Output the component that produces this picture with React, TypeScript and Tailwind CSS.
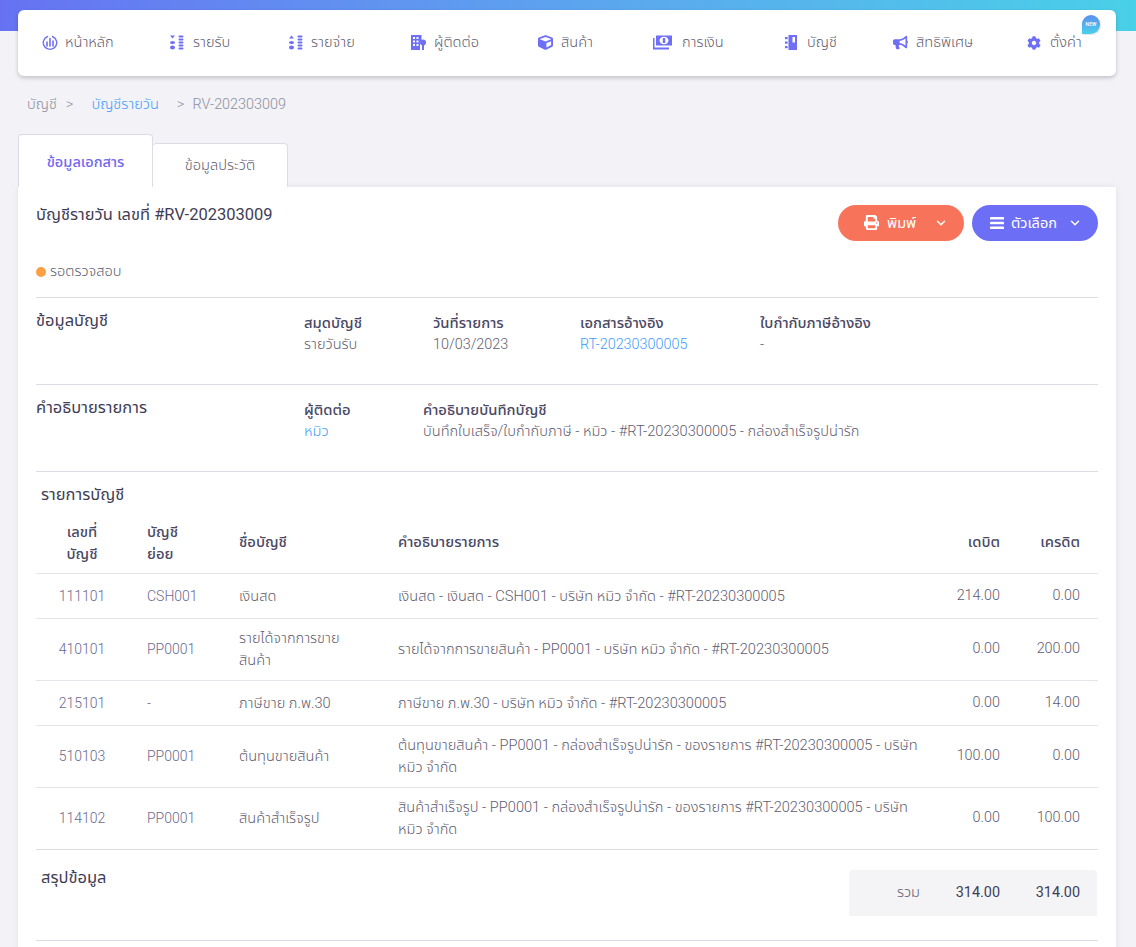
import { FaPrint, FaCog, FaBullhorn, FaCube } from 'react-icons/fa';
import { ChevronDown } from 'lucide-react';

const fontStack = "font-['Roboto','Noto_Sans','Noto_Sans_Thai',sans-serif]";

function Stacks({ up }: { up?: boolean }) {
  return (
    <svg viewBox="0 0 14 15" className="h-[15px] w-[14px]" fill="#6e6ff5">
      <path d={up ? 'M2.5 0.5 L5 3.5 H0 Z' : 'M0 0.5 H5 L2.5 3.5 Z'} />
      <ellipse cx="2.5" cy="7.500" rx="2.500" ry="1.500" />
      <ellipse cx="2.5" cy="12.500" rx="2.500" ry="2" />
      <rect x="8.5" y="0.5" width="5" height="2" rx="1" />
      <rect x="8.5" y="3.5" width="5" height="2" rx="1" />
      <rect x="8.5" y="6.5" width="5" height="2" rx="1" />
      <rect x="8.5" y="9.5" width="5" height="2" rx="1" />
      <rect x="8.5" y="12.5" width="5" height="2" rx="1" />
    </svg>
  );
}

function HomeIcon() {
  return (
    <svg viewBox="0 0 16 16" className="h-[16px] w-[16px]" fill="none" stroke="#6e6ff5">
      <path d="M5.500 1.500 A6.700 6.700 0 1 0 10.500 1.500" strokeWidth="1.400" strokeLinecap="round" />
      <path d="M5 7v4M8 3.500v7.500M11 6v5" strokeWidth="1.600" strokeLinecap="round" />
    </svg>
  );
}

function ContactIcon() {
  return (
    <svg viewBox="0 0 15 15" className="h-[15px] w-[15px]" fill="#6e6ff5">
      <path d="M0 0H10.5V5.500A3 3 0 0 0 9 9V15H0ZM2 2V4H4V2ZM5.5 2V4H7.5V2ZM2 5.5V7.5H4V5.5ZM5.5 5.5V7.5H7.5V5.5ZM2 9V11H4V9ZM5.5 9V11H7.5V9Z" fillRule="evenodd" />
      <circle cx="12" cy="7.500" r="3" />
      <rect x="11" y="9.500" width="2" height="5.500" />
    </svg>
  );
}

function MoneyIcon() {
  return (
    <svg viewBox="0 0 19 15" className="h-[15px] w-[19px]" fill="#6e6ff5">
      <path d="M3 0.500H19V10.500H3ZM11 1.800C8.500 1.800 6.500 3.300 6.500 5.500S8.500 9.200 11 9.200S15.500 7.700 15.500 5.500S13.500 1.800 11 1.800Z" fillRule="evenodd" />
      <rect x="9.800" y="3" width="2.400" height="5" />
      <path d="M0 3H1.500V12.500H16V14.500H0Z" />
    </svg>
  );
}

function BookIcon() {
  return (
    <svg viewBox="0 0 12 15" className="h-[15px] w-[12px]" fill="#6e6ff5">
      <path d="M3.500 0H12V15H3.500ZM7.500 2V7.500H10V2Z" fillRule="evenodd" />
      <rect x="0" y="2" width="2.600" height="2.200" />
      <rect x="0" y="6.500" width="2.600" height="2.200" />
      <rect x="0" y="11" width="2.600" height="2.200" />
    </svg>
  );
}

function BarsIcon() {
  return (
    <svg viewBox="0 0 14 12" className="h-[12px] w-[14px]" fill="currentColor">
      <rect x="0" y="0" width="14" height="2.600" rx="0.600" />
      <rect x="0" y="4.700" width="14" height="2.600" rx="0.600" />
      <rect x="0" y="9.400" width="14" height="2.600" rx="0.600" />
    </svg>
  );
}

const navItems = [
  { icon: <HomeIcon />, label: 'หน้าหลัก', width: 'w-[128px]', gap: 'gap-[7px]' },
  { icon: <Stacks />, label: 'รายรับ', width: 'w-[119px]', gap: 'gap-[9px]' },
  { icon: <Stacks up />, label: 'รายจ่าย', width: 'w-[122px]', gap: 'gap-[8px]' },
  { icon: <ContactIcon />, label: 'ผู้ติดต่อ', width: 'w-[127px]', gap: 'gap-[8px]' },
  { icon: <FaCube className="h-[15px] w-[15px] text-[#6e6ff5]" />, label: 'สินค้า', width: 'w-[115px]', gap: 'gap-[8px]' },
  { icon: <MoneyIcon />, label: 'การเงิน', width: 'w-[132px]', gap: 'gap-[10px]' },
  { icon: <BookIcon />, label: 'บัญชี', width: 'w-[108px]', gap: 'gap-[10px]' },
  { icon: <FaBullhorn className="h-[15px] w-[15px] text-[#6e6ff5]" />, label: 'สิทธิพิเศษ', width: 'w-[134px]', gap: 'gap-[8px]' },
];

const rows = [
  { code: '111101', sub: 'CSH001', name: 'เงินสด', desc: 'เงินสด - เงินสด - CSH001 - บริษัท หมิว จำกัด - #RT-20230300005', dr: '214.00', cr: '0.00' },
  { code: '410101', sub: 'PP0001', name: 'รายได้จากการขายสินค้า', desc: 'รายได้จากการขายสินค้า - PP0001 - บริษัท หมิว จำกัด - #RT-20230300005', dr: '0.00', cr: '200.00' },
  { code: '215101', sub: '-', name: 'ภาษีขาย ภ.พ.30', desc: 'ภาษีขาย ภ.พ.30 - บริษัท หมิว จำกัด - #RT-20230300005', dr: '0.00', cr: '14.00' },
  { code: '510103', sub: 'PP0001', name: 'ต้นทุนขายสินค้า', desc: 'ต้นทุนขายสินค้า - PP0001 - กล่องสำเร็จรูปน่ารัก - ของรายการ #RT-20230300005 - บริษัท หมิว จำกัด', dr: '100.00', cr: '0.00' },
  { code: '114102', sub: 'PP0001', name: 'สินค้าสำเร็จรูป', desc: 'สินค้าสำเร็จรูป - PP0001 - กล่องสำเร็จรูปน่ารัก - ของรายการ #RT-20230300005 - บริษัท หมิว จำกัด', dr: '0.00', cr: '100.00' },
];

export default function App() {
  return (
    <div className={`h-[947px] overflow-hidden bg-[#f2f2f7] text-[14.6px] font-light text-[#5f5c70] ${fontStack}`}>
      <div className="h-[31px] bg-gradient-to-r from-[#6672f2] to-[#48d0e8]" />

      <div className="relative ml-[18px] mr-[20px] -mt-[21px] flex h-[66px] items-center rounded-[6px] bg-white pl-[24px] shadow-[0_2px_4px_rgba(0,0,0,0.2)]">
        {navItems.map((item) => (
          <div key={item.label} className={`flex items-center ${item.gap} ${item.width}`}>
            {item.icon}
            <span>{item.label}</span>
          </div>
        ))}
        <div className="flex items-center gap-[9px]">
          <FaCog className="h-[14px] w-[14px] text-[#6e6ff5]" />
          <span>ตั้งค่า</span>
        </div>
        <div className="absolute right-[16px] top-[5px] flex h-[19px] w-[18px] items-center justify-center rounded-full rounded-bl-[2px] bg-gradient-to-b from-[#5b8df0] to-[#48d0e8] text-[5px] font-medium text-white shadow-[1px_1px_1px_rgba(0,0,0,0.1)]">
          NEW
        </div>
      </div>

      <div className="flex h-[39px] items-center pl-[27px] pt-[19px] text-[#8f8f9c]">
        <span>บัญชี</span>
        <span className="ml-[9px]">&gt;</span>
        <span className="ml-[18px] text-[#3f9cf7]">บัญชีรายวัน</span>
        <span className="ml-[18px]">&gt;</span>
        <span className="ml-[8px] text-[14.4px]">RV-202303009</span>
      </div>

      <div className="ml-[18px] mr-[20px] mt-[19px] flex h-[53px] items-end">
        <div className="flex h-[53px] w-[135px] justify-center rounded-t-[4px] border border-b-0 border-[#dcdce6] bg-white pt-[17px] font-medium text-[#7367f0]">
          ข้อมูลเอกสาร
        </div>
        <div className="flex h-[44px] w-[135px] justify-center rounded-t-[4px] border border-b-0 border-l-0 border-[#dcdce6] bg-white pt-[11px]">
          ข้อมูลประวัติ
        </div>
      </div>

      <div className="ml-[18px] mr-[20px] h-[800px] bg-white px-[18px] shadow-[0_0_6px_rgba(0,0,0,0.08)]">
        <div className="flex justify-between pt-[18px]">
          <div className="-mt-[2px] text-[16.5px] font-normal text-[#3f3d56]">บัญชีรายวัน เลขที่ #RV-202303009</div>
          <div className="flex gap-[8px]">
            <div className="flex h-[36px] w-[126px] items-center justify-between rounded-full bg-[#f7745a] pl-[26px] pr-[16px] font-normal text-white">
              <span className="flex items-center gap-[8px]">
                <FaPrint className="h-[15px] w-[15px]" />
                <span className="pt-px">พิมพ์</span>
              </span>
              <ChevronDown size={14} strokeWidth={2.5} />
            </div>
            <div className="flex h-[36px] w-[126px] items-center justify-between rounded-full bg-[#6c6ff5] pl-[18px] pr-[16px] font-normal text-white">
              <span className="flex items-center gap-[7px]">
                <BarsIcon />
                <span className="pt-px">ตัวเลือก</span>
              </span>
              <ChevronDown size={14} strokeWidth={2.5} />
            </div>
          </div>
        </div>

        <div className="mt-[21px] flex h-[20px] items-center gap-[4px]">
          <span className="h-[10px] w-[10px] rounded-full bg-[#ff9f43]" />
          รอตรวจสอบ
        </div>

        <div className="mt-[15px] flex h-[87px] border-t border-[#dcdce6] pt-[15px] leading-[21px]">
          <div className="-mt-[4px] w-[268px] text-[16.5px] font-normal leading-[24px] text-[#3f3d56]">ข้อมูลบัญชี</div>
          <div className="w-[129px]">
            <div className="text-[14.8px] font-medium text-[#4a4865]">สมุดบัญชี</div>
            <div>รายวันรับ</div>
          </div>
          <div className="w-[147px]">
            <div className="text-[14.8px] font-medium text-[#4a4865]">วันที่รายการ</div>
            <div className="text-[14.4px]">10/03/2023</div>
          </div>
          <div className="w-[180px]">
            <div className="text-[14.8px] font-medium text-[#4a4865]">เอกสารอ้างอิง</div>
            <div className="text-[14.4px] text-[#3f9cf7]">RT-20230300005</div>
          </div>
          <div>
            <div className="text-[14.8px] font-medium text-[#4a4865]">ใบกำกับภาษีอ้างอิง</div>
            <div>-</div>
          </div>
        </div>

        <div className="flex h-[87px] border-t border-[#dcdce6] pt-[15px] leading-[21px]">
          <div className="-mt-[4px] w-[268px] text-[16.5px] font-normal leading-[24px] text-[#3f3d56]">คำอธิบายรายการ</div>
          <div className="w-[119px]">
            <div className="text-[14.8px] font-medium text-[#4a4865]">ผู้ติดต่อ</div>
            <div className="text-[#3f9cf7]">หมิว</div>
          </div>
          <div>
            <div className="text-[14.8px] font-medium text-[#4a4865]">คำอธิบายบันทึกบัญชี</div>
            <div>บันทึกใบเสร็จ/ใบกำกับภาษี - หมิว - #RT-20230300005 - กล่องสำเร็จรูปน่ารัก</div>
          </div>
        </div>

        <div className="h-[47px] border-t border-[#dcdce6] pl-[5px] pt-[11px] text-[16.5px] font-normal text-[#3f3d56]">รายการบัญชี</div>

        <table className="w-full table-fixed border-collapse">
          <colgroup>
            <col className="w-[92px]" />
            <col className="w-[91px]" />
            <col className="w-[160px]" />
            <col />
            <col className="w-[80px]" />
            <col className="w-[98px]" />
          </colgroup>
          <thead>
            <tr className="h-[55px] text-[14.8px] text-[#4a4865]">
              <th className="pb-[4px] text-center font-medium leading-[22px]">เลขที่<br />บัญชี</th>
              <th className="pb-[4px] pl-[19px] text-left font-medium leading-[22px]">บัญชี<br />ย่อย</th>
              <th className="pb-[7px] pl-[20px] text-left font-medium">ชื่อบัญชี</th>
              <th className="pb-[7px] pl-[19px] text-left font-medium">คำอธิบายรายการ</th>
              <th className="pb-[7px] text-right font-medium">เดบิต</th>
              <th className="pb-[7px] pr-[18px] text-right font-medium">เครดิต</th>
            </tr>
          </thead>
          <tbody>
            {rows.map((row) => (
              <tr key={row.code} className="h-[45px] border-t border-[#e4e4ec] leading-[22px]">
                <td className="py-[8.5px] text-center text-[14px] text-[#6b6990]">{row.code}</td>
                <td className="py-[8.5px] pl-[19px] text-[14px] text-[#6b6990]">{row.sub}</td>
                <td className="py-[8.5px] pl-[20px] pr-[20px]">{row.name}</td>
                <td className="py-[8.5px] pl-[19px]">{row.desc}</td>
                <td className="py-[8.5px] text-right text-[14.4px]">{row.dr}</td>
                <td className="py-[8.5px] pr-[18px] text-right text-[14.4px]">{row.cr}</td>
              </tr>
            ))}
          </tbody>
        </table>

        <div className="flex h-[92px] items-start justify-between border-y border-[#dcdce6] pt-[20px]">
          <div className="-mt-[4px] pl-[5px] text-[16.5px] font-normal text-[#3f3d56]">สรุปข้อมูล</div>
          <div className="mr-px flex h-[46px] w-[248px] items-center rounded-t-[4px] bg-[#f4f4f6]">
            <span className="w-[71px] text-right">รวม</span>
            <span className="w-[80px] text-right text-[14.4px] font-normal text-[#3f3d56]">314.00</span>
            <span className="w-[80px] text-right text-[14.4px] font-normal text-[#3f3d56]">314.00</span>
          </div>
        </div>
      </div>
    </div>
  );
}
